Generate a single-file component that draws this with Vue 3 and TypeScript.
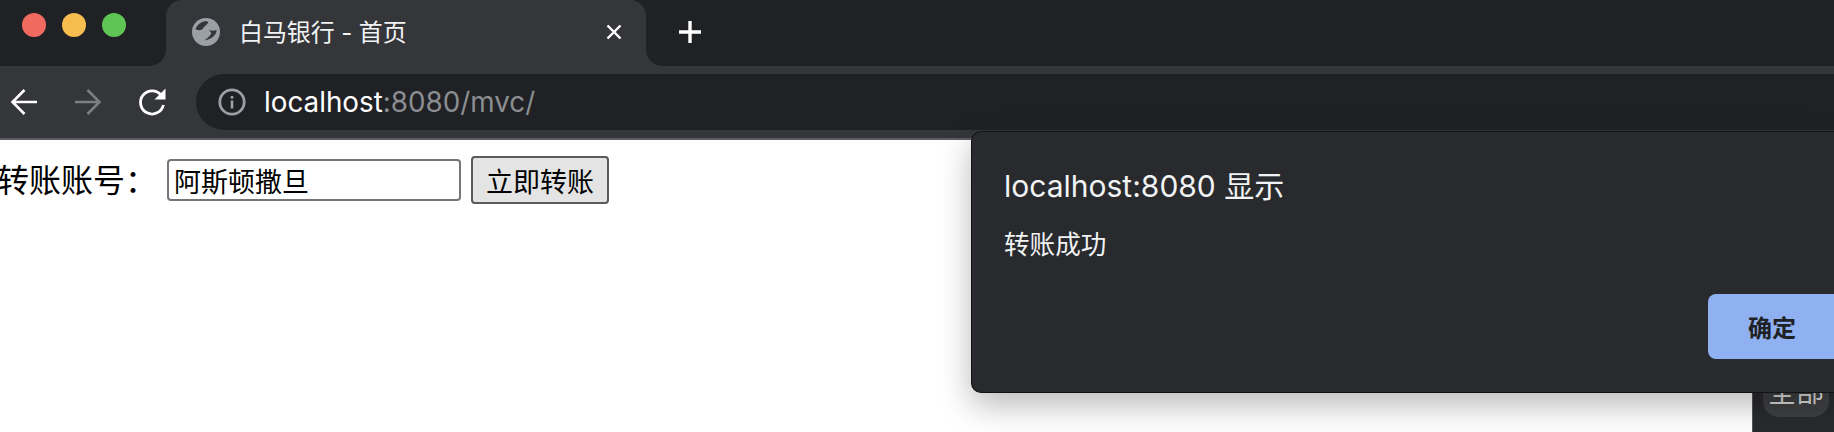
<template>
  <div class="screen">
    <header class="tabstrip">
      <div class="lights">
        <span class="light light--red" />
        <span class="light light--yellow" />
        <span class="light light--green" />
      </div>
      <div class="tab">
        <svg class="tab__icon" viewBox="0 0 28 28" width="28" height="28">
          <circle cx="14" cy="14" r="14" fill="#9aa0a6" />
          <path d="M14.5 3 C9.5 3.4 5.3 6.5 3.4 11 C6 12.6 9 12.6 10.6 11 C11.8 8.6 14.8 7 16.4 4.6 Z" fill="#35363a" />
          <path d="M16 11 C18 13 21 13 24.6 12 C24.6 16.5 20.5 21 12.6 22.4 C15 20.4 19.2 17.4 19.2 14.8 C18.4 13.2 17 12 16 11 Z" fill="#35363a" />
        </svg>
        <span class="tab__title">{{ tabTitle }}</span>
        <svg class="tab__close" viewBox="0 0 16 16" width="16" height="16">
          <path d="M1.5 1.5 L14.5 14.5 M14.5 1.5 L1.5 14.5" stroke="#fff" stroke-width="2.4" />
        </svg>
      </div>
      <svg class="newtab" viewBox="0 0 24 24" width="24" height="24">
        <path d="M12 1 V23 M1 12 H23" stroke="#fff" stroke-width="3.4" />
      </svg>
    </header>

    <div class="toolbar">
      <svg class="navbtn" viewBox="0 0 48 48" width="48" height="48">
        <path d="M37 24 H13 M24.5 12 L12.5 24 L24.5 36" fill="none" stroke="#fff" stroke-width="2.6" />
      </svg>
      <svg class="navbtn" viewBox="0 0 48 48" width="48" height="48">
        <path d="M11 24 H35 M23.5 12 L35.5 24 L23.5 36" fill="none" stroke="#7d7e81" stroke-width="2.6" />
      </svg>
      <svg class="navbtn" viewBox="0 0 48 48" width="48" height="48">
        <path d="M33.2 17.2 A11.6 11.6 0 1 0 35.4 27" fill="none" stroke="#fff" stroke-width="2.8" />
        <path d="M37.5 10.5 V21.5 H26.5 Z" fill="#fff" />
      </svg>
      <div class="omnibox">
        <svg viewBox="0 0 28 28" width="28" height="28">
          <circle cx="14" cy="14" r="12.2" fill="none" stroke="#9aa0a6" stroke-width="2.8" />
          <rect x="12.7" y="12.5" width="2.6" height="8" fill="#9aa0a6" />
          <rect x="12.7" y="8" width="2.6" height="2.6" fill="#9aa0a6" />
        </svg>
        <span class="omnibox__url"><b>localhost</b>:8080/mvc/</span>
      </div>
    </div>

    <main class="page">
      <label class="page__label">转账账号：</label>
      <input class="page__input" type="text" :value="account" />
      <button type="button" class="page__btn">立即转账</button>
    </main>

    <aside class="sidepanel">
      <span class="sidepanel__pill">全部</span>
    </aside>

    <section class="dialog">
      <h2 class="dialog__title">localhost:8080 显示</h2>
      <p class="dialog__msg">转账成功</p>
      <div class="dialog__actions">
        <button type="button" class="dialog__ok">确定</button>
      </div>
    </section>
  </div>
</template>

<script setup lang="ts">
const tabTitle = '白马银行 - 首页';
const account = '阿斯顿撒旦';
</script>

<style>
html,body{margin:0;background:#fff;overflow:hidden}
</style>

<style scoped>
.screen{position:relative;width:1834px;height:432px;overflow:hidden;background:#fff;font-family:Inter,"Noto Sans CJK SC",sans-serif}
.tabstrip{display:flex;align-items:stretch;height:66px;background:#202124}
.lights{display:flex;gap:16px;width:166px;box-sizing:border-box;padding:13px 0 0 22px}
.light{width:24px;height:24px;border-radius:50%}
.light--red{background:#f16a5f}
.light--yellow{background:#f7bd4f}
.light--green{background:#5ec454}
.tab{position:relative;display:flex;align-items:center;width:480px;box-sizing:border-box;padding:0 24px 2px 26px;background:#35363a;border-radius:16px 16px 0 0;color:#fff}
.tab::before,.tab::after{content:"";position:absolute;bottom:0;width:16px;height:16px}
.tab::before{left:-16px;background:radial-gradient(circle at 0 0,transparent 15.5px,#35363a 16px)}
.tab::after{right:-16px;background:radial-gradient(circle at 100% 0,transparent 15.5px,#35363a 16px)}
.tab__title{flex:1;margin:0 0 3px 19px;font-size:24px;letter-spacing:-.1px;color:#f1f3f4;font-family:Inter,"Noto Sans CJK SC",sans-serif}
.tab__close{flex:none}
.newtab{align-self:center;margin-left:32px;margin-bottom:2px}
.toolbar{display:flex;align-items:center;gap:16px;height:72px;background:#35363a;border-bottom:2px solid #5c5d61}
.navbtn{flex:none}
.omnibox{flex:1;display:flex;align-items:center;gap:18px;height:56px;margin-left:4px;padding-left:22px;border-radius:28px 0 0 28px;background:#202124}
.omnibox__url{font-size:27.8px;color:#8a8d91}
.omnibox__url b{font-weight:400;color:#fff}
.page{display:flex;align-items:center;height:80px;margin-left:-3px;color:#000;font-family:"Noto Sans CJK SC",sans-serif}
.page__label{width:170px;margin-bottom:4px;font-size:32px;line-height:48px}
.page__input{width:294px;height:42px;box-sizing:border-box;padding:0 5px;border:2px solid #767676;border-radius:4px;background:#fff;color:#000;font:27px "Noto Sans CJK SC",sans-serif;outline:none}
.page__btn{width:138px;height:48px;margin-left:10px;padding:0;box-sizing:border-box;border:2px solid #5a5a5a;border-radius:4px;background:#e4e4e4;color:#000;font:27px "Noto Sans CJK SC",sans-serif}
.sidepanel{position:absolute;left:1752px;top:340px;right:0;bottom:0;border-left:1px solid #555;background:#292a2d}
.sidepanel__pill{position:absolute;left:10px;top:24px;width:66px;height:53px;box-sizing:border-box;padding-top:8px;border-radius:16px;background:#3e3f41;color:#d8d8d8;font-size:28px;line-height:40px;text-align:center}
.dialog{position:absolute;left:971px;top:131px;right:0;height:262px;box-sizing:border-box;padding:33px 0 0 32px;border:1px solid #111214;border-right:0;border-radius:10px 0 0 10px;background:#292a2e;box-shadow:0 12px 32px rgba(0,0,0,.28);color:#f1f3f4}
.dialog__title{margin:0;font-size:30px;font-weight:400;line-height:42px}
.dialog__msg{margin:18px 0 0;font-size:25.6px;line-height:36px;font-family:"Noto Sans CJK SC",sans-serif}
.dialog__actions{display:flex;justify-content:flex-end;margin-top:33px}
.dialog__ok{width:126px;height:65px;padding:0 0 0 2px;border:0;border-radius:8px 0 0 8px;background:#8fb1f2;color:#202124;font:700 24px "Noto Sans CJK SC",sans-serif}
</style>
